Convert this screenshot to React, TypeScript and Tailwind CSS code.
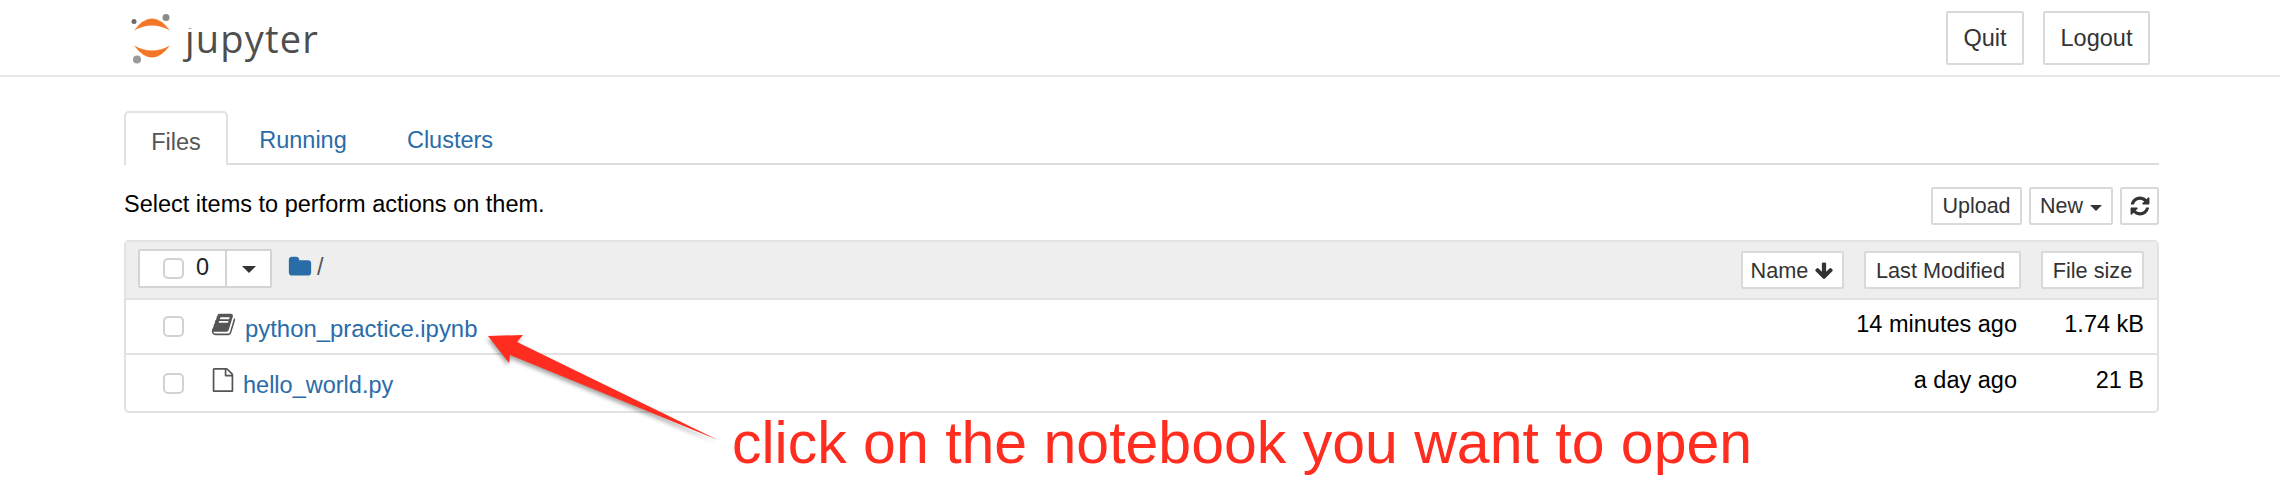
const FA = ({ d, className }: { d: string; className: string }) => (
  <svg viewBox="0 0 1792 1792" className={className} fill="currentColor">
    <path d={d} />
  </svg>
);

const REFRESH = "M1639 1056q0 5-1 7-64 268-268 434.5t-478 166.5q-146 0-282.5-55t-243.5-157l-129 129q-19 19-45 19t-45-19-19-45v-448q0-26 19-45t45-19h448q26 0 45 19t19 45-19 45l-137 137q71 66 161 102t187 36q134 0 250-65t186-179q11-17 53-117 8-23 30-23h192q13 0 22.5 9.5t9.5 22.5zm25-800v448q0 26-19 45t-45 19h-448q-26 0-45-19t-19-45 19-45l138-138q-148-137-349-137-134 0-250 65t-186 179q-11 17-53 117-8 23-30 23h-199q-13 0-22.5-9.5t-9.5-22.5v-7q65-268 270-434.5t480-166.5q146 0 284 55.5t245 156.5l130-129q19-19 45-19t45 19 19 45z";
const FOLDER = "M1728 608v704q0 92-66 158t-158 66h-1216q-92 0-158-66t-66-158v-960q0-92 66-158t158-66h320q92 0 158 66t66 158v32h672q92 0 158 66t66 158z";
const ARROW_DOWN = "M1675 832q0 53-37 90l-651 652q-39 37-91 37-53 0-90-37l-651-652q-38-36-38-90 0-53 38-91l74-75q39-37 91-37 53 0 90 37l294 294v-704q0-52 38-90t90-38h128q52 0 90 38t38 90v704l294-294q37-37 90-37 52 0 91 37l75 75q37 39 37 91z";
const FILE_O = "M1596 380q28 28 48 76t20 88v1152q0 40-28 68t-68 28h-1344q-40 0-68-28t-28-68v-1600q0-40 28-68t68-28h896q40 0 88 20t76 48zm-444-244v376h376q-10-29-22-41l-313-313q-12-12-41-22zm384 1528v-1024h-416q-40 0-68-28t-28-68v-416h-768v1536h1280z";
const BOOK = "M1703 478q40 57 18 129l-275 906q-19 64-76.5 107.5t-122.5 43.5h-923q-77 0-148.5-53.5t-99.5-131.5q-24-67-2-127 0-4 3-27t4-37q1-8-3-21.5t-3-19.5q2-11 8-21t16.5-23.5 16.5-23.5q23-38 45-91.5t30-91.5q3-10 .5-30t-.5-28q3-11 17-28t17-23q21-36 42-92t25-90q1-9-2.5-32t.5-28q4-13 22-30.5t22-22.5q19-26 42.5-84.5t27.5-96.5q1-8-3-25.5t-2-26.5q2-8 9-18t18-23 17-21q8-12 16.5-30.5t15-35 16-36 19.5-32 26.5-23.5 36-11.5 47.5 5.5l-1 3q38-9 51-9h761q74 0 114 56t18 130l-274 906q-36 119-71.5 153.5t-128.5 34.5h-869q-27 0-38 15-11 16-1 43 24 70 144 70h923q29 0 56-15.5t35-41.5l300-987q7-22 5-57 38 15 59 43zm-1064 2q-4 13 2 22.5t20 9.5h608q13 0 25.5-9.5t16.5-22.5l21-64q4-13-2-22.5t-20-9.5h-608q-13 0-25.5 9.5t-16.5 22.5zm-83 256q-4 13 2 22.5t20 9.5h608q13 0 25.5-9.5t16.5-22.5l21-64q4-13-2-22.5t-20-9.5h-608q-13 0-25.5 9.5t-16.5 22.5z";

const ARROW = "488,336 523,335 517,342 718,440 510,355 509,363";

function Logo() {
  return (
    <div className="flex items-center">
      <svg width="44" height="52" viewBox="0 0 44 52" className="shrink-0">
        <path d="M3 18.5 Q21 -5.5 39 18.5 Q21 8.5 3 18.5Z" fill="#f37726" />
        <path d="M3 33.5 Q21 57.5 39 33.5 Q21 43.5 3 33.5Z" fill="#f37726" />
        <circle cx="35" cy="5.5" r="3.5" fill="#8a8a8a" />
        <circle cx="3" cy="9.5" r="2.5" fill="#6b6b6b" />
        <circle cx="6" cy="47.5" r="4" fill="#9a9a9a" />
      </svg>
      <div className="ml-[10px] font-['Open_Sans',sans-serif] font-medium text-[38px] leading-[40px] text-[#4e4e4e] tracking-[1.2px]">
        <span className="inline-block [clip-path:inset(11px_-10px_-10px_-10px)]">j</span>upyter
      </div>
    </div>
  );
}

function Check({ className }: { className: string }) {
  return <span className={`block w-[21px] h-[21px] rounded-[5px] border-2 border-[#d2d2d2] bg-white ${className}`} />;
}

function Btn({ children, className }: { children: React.ReactNode; className: string }) {
  return (
    <div className={`flex items-center justify-center h-[38px] bg-white border-2 border-[#d9d9d9] rounded-[2px] text-[#333] ${className}`}>
      {children}
    </div>
  );
}

function Row({ icon, name, nameSize, gap, date, size, h, last }: { icon: React.ReactNode; name: string; nameSize: string; gap: string; date: string; size: string; h: string; last?: boolean }) {
  return (
    <div className={`flex items-center ${h} pl-[37px] pr-[13px] ${last ? "" : "border-b-2 border-[#e2e2e2]"}`}>
      <Check className="shrink-0" />
      <div className={`ml-[27px] flex items-center ${gap}`}>
        {icon}
        <span className={`text-[#2a6ca8] ${nameSize} leading-[30px] translate-y-[2px]`}>{name}</span>
      </div>
      <span className="ml-auto text-black text-[23.5px] leading-[30px] -translate-y-[3px]">{date}</span>
      <span className="w-[127px] text-right text-black text-[23.5px] leading-[30px] -translate-y-[3px]">{size}</span>
    </div>
  );
}

export default function App() {
  return (
    <div className="relative w-[2280px] h-[492px] overflow-hidden bg-white font-['Liberation_Sans',Arial,sans-serif]">
      <header className="flex items-center justify-between h-[77px] pl-[131px] pr-[130px] border-b-2 border-[#e9e9e9]">
        <Logo />
        <div className="flex items-center gap-[19px] text-[#333] text-[23.5px]">
          <Btn className="w-[78px] !h-[54px] pt-[3px]">Quit</Btn>
          <Btn className="w-[107px] !h-[54px] pt-[3px]">Logout</Btn>
        </div>
      </header>

      <main className="pl-[124px] pr-[121px] pt-[34px]">
        <nav className="flex items-end h-[54px] border-b-2 border-[#dedede] text-[23.5px]">
          <div className="w-[104px] h-[54px] -mb-[2px] pt-[8px] flex items-center justify-center bg-white border-2 border-b-0 border-[#e2e2e2] rounded-t-[5px] text-[#555]">
            Files
          </div>
          <div className="w-[150px] h-[52px] pt-[8px] flex items-center justify-center text-[#2a6ca8]">Running</div>
          <div className="w-[144px] h-[52px] pt-[8px] flex items-center justify-center text-[#2a6ca8]">Clusters</div>
        </nav>

        <div className="flex items-center justify-between mt-[22px] h-[38px] text-[23.5px]">
          <span className="text-black -translate-y-[1px]">Select items to perform actions on them.</span>
          <div className="flex items-center gap-[7px] text-[21.5px]">
            <Btn className="w-[91px]">Upload</Btn>
            <Btn className="w-[84px] gap-[7px]">
              New
              <span className="w-0 h-0 border-x-[6px] border-x-transparent border-t-[6px] border-t-[#333] mt-[3px]" />
            </Btn>
            <Btn className="w-[39px]">
              <FA d={REFRESH} className="w-[22px] h-[22px]" />
            </Btn>
          </div>
        </div>

        <div className="mt-[15px] w-[2035px] border-2 border-[#e2e2e2] rounded-[5px] overflow-hidden">
          <div className="flex items-center h-[58px] pl-[12px] pr-[13px] bg-[#eeeeee] border-b-2 border-[#e2e2e2] text-[21.7px]">
            <div className="flex h-[39px] w-[134px] -translate-y-[2px] bg-white border-2 border-[#d4d4d4] rounded-[2px]">
              <div className="flex items-center w-[87px] pl-[23px] border-r-2 border-[#d4d4d4] text-[23.5px] text-[#222]">
                <Check className="shrink-0" />
                <span className="ml-[12px]">0</span>
              </div>
              <div className="flex-1 flex items-center justify-center">
                <span className="w-0 h-0 border-x-[7px] border-x-transparent border-t-[7px] border-t-[#333] mt-[2px]" />
              </div>
            </div>
            <FA d={FOLDER} className="ml-[16px] w-[24px] h-[24px] text-[#2a6ca8] -translate-y-[3px]" />
            <span className="ml-[5px] text-[#555] text-[23.5px] -translate-y-[2px]">/</span>

            <div className="ml-auto flex items-center gap-[20px]">
              <Btn className="w-[103px] gap-[6px] pt-[2px]">
                Name
                <FA d={ARROW_DOWN} className="w-[20px] h-[20px]" />
              </Btn>
              <Btn className="w-[157px] pt-[2px] pr-[4px]">Last Modified</Btn>
              <Btn className="w-[103px] pt-[2px]">File size</Btn>
            </div>
          </div>
          <Row
            h="h-[55px]"
            gap="gap-[9px]"
            nameSize="text-[23.9px]"
            icon={<FA d={BOOK} className="w-[25px] h-[25px] text-[#555] -translate-y-[2px]" />}
            name="python_practice.ipynb"
            date="14 minutes ago"
            size="1.74 kB"
          />
          <Row
            last
            h="h-[56px]"
            gap="gap-[8px]"
            nameSize="text-[23.5px]"
            icon={<FA d={FILE_O} className="w-[24px] h-[24px] text-[#555] -translate-y-[3px]" />}
            name="hello_world.py"
            date="a day ago"
            size="21 B"
          />
        </div>
      </main>

      {/* annotation laid over the screenshot */}
      <svg width="2280" height="492" viewBox="0 0 2280 492" className="absolute left-0 top-0 pointer-events-none">
        <polygon points={ARROW} fill="#000" opacity="0.35" transform="translate(-1 3)" style={{ filter: "blur(2px)" }} />
        <polygon points={ARROW} fill="#ff2d1f" />
      </svg>
      <div className="absolute left-[732px] top-[408px] text-[#ff2d1f] text-[59px] leading-[70px] whitespace-nowrap">
        click on the notebook you want to open
      </div>
    </div>
  );
}
